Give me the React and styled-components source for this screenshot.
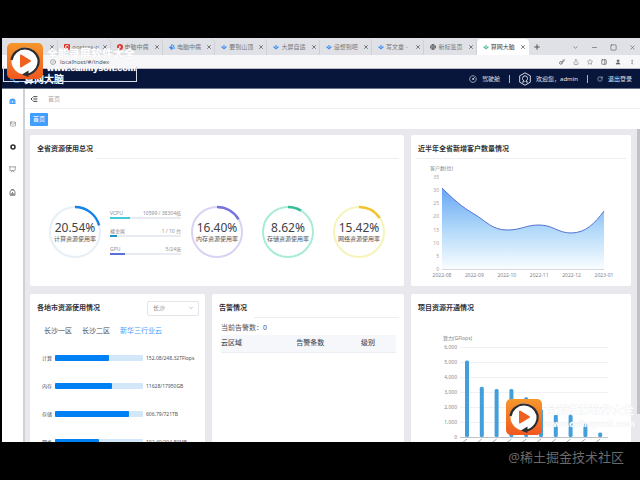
import {
  ChevronDown,
  CircleGauge,
  Globe,
  IndentDecrease,
  Info,
  Key,
  Mail,
  Minus,
  MoreVertical,
  PanelRight,
  PawPrint,
  Plus,
  Presentation,
  RotateCw,
  Share,
  Square,
  Star,
  User,
  X,
} from "lucide-react";
import React from "react";
import styled, { createGlobalStyle } from "styled-components";

const GlobalStyle = createGlobalStyle`
  * {
    box-sizing: border-box;
  }
  body {
    margin: 0;
    background: #000;
    font-family: "Noto Sans", "Noto Sans CJK SC", sans-serif;
    font-size: 6px;
    line-height: 8px;
    color: #505258;
  }
  button, input, select {
    font: inherit;
    color: inherit;
    border: 0;
    padding: 0;
    margin: 0;
    background: none;
  }
  a {
    color: inherit;
    text-decoration: none;
  }
  svg {
    flex: none;
  }
`;

const Stage = styled.div`
  height: 100vh;
  display: flex;
  flex-direction: column;
  padding-top: 38px;
`;
const Screen = styled.div`
  position: relative;
  flex: 1;
  min-height: 0;
  margin-left: 2px;
  display: flex;
  flex-direction: column;
  overflow: hidden;
  background: #fff;
`;
const Caption = styled.footer`
  height: 38px;
  padding: 5px 16px;
  text-align: right;
  font-size: 13px;
  line-height: 20px;
  color: #6a6a6a;
`;

/* browser window */
const TabStrip = styled.div`
  flex: none;
  height: 17px;
  display: flex;
  align-items: center;
  padding: 1px 4px 0;
  background: #dfe1e6;
`;
const Tabs = styled.div`
  display: flex;
  align-self: stretch;
  width: 83%;
  margin-right: 4px;
`;
const Tab = styled.div`
  flex: 1;
  min-width: 0;
  display: flex;
  align-items: center;
  gap: 2px;
  padding: 0 3px 0 6px;
  border-radius: 4px 4px 0 0;
  color: ${(props) => (props.$active ? "#444" : "#777")};
  background: ${(props) => (props.$active ? "#fff" : "transparent")};
  box-shadow: ${(props) => (props.$active ? "none" : "inset -1px 0 #cfd1d6")};
`;
const TabTitle = styled.span`
  flex: 1;
  white-space: nowrap;
`;
const IconButton = styled.button`
  display: flex;
  color: #555;
`;
const WindowButtons = styled.div`
  margin-left: auto;
  display: flex;
  gap: 12px;
`;
const AddressBar = styled.div`
  flex: none;
  height: 14px;
  display: flex;
  align-items: center;
  gap: 4px;
  padding: 0 5px 0 48px;
  background: #f7f7f9;
  border-bottom: 1px solid #b9bcc6;
  color: #666;
`;
const Address = styled.input`
  flex: 1;
  height: 10px;
  color: #555;
`;
const Actions = styled.div`
  display: flex;
  gap: 8px;
`;

/* site header */
const Header = styled.header`
  flex: none;
  height: 20px;
  display: flex;
  align-items: center;
  padding: 0 8px 0 7px;
  background: #08163b;
  border-bottom: 1px solid #6c7489;
  color: #e3e7f2;
`;
const Brand = styled.div`
  display: flex;
  align-items: center;
  gap: 4px;
  color: #fff;
  font-size: 10px;
  line-height: 12px;
  font-weight: 700;
`;
const HeaderNav = styled.nav`
  margin-left: auto;
  display: flex;
  align-items: center;
  gap: 9px;
`;
const HeaderLink = styled.a`
  display: flex;
  align-items: center;
  gap: 5px;
`;
const Divider = styled.span`
  width: 1px;
  height: 8px;
  background: #aab2c8;
`;

/* body */
const Body = styled.div`
  flex: 1;
  min-height: 0;
  display: flex;
`;
const Sidebar = styled.nav`
  flex: none;
  width: 23px;
  border-right: 2px solid #cfd1d8;
`;
const SideLink = styled.a`
  height: 23px;
  display: flex;
  align-items: center;
  justify-content: center;
  color: ${(props) => (props.$active ? "#409eff" : "#666")};
`;
const Main = styled.main`
  flex: 1;
  min-width: 0;
  display: flex;
  flex-direction: column;
`;
const Crumbs = styled.div`
  flex: none;
  height: 20px;
  display: flex;
  align-items: center;
  gap: 10px;
  padding: 0 5px;
  border-bottom: 1px solid #f0f1f4;
  color: #a9abb2;
`;
const TagRow = styled.div`
  flex: none;
  height: 20px;
  display: flex;
  align-items: center;
  padding: 0 5px;
`;
const Tag = styled.button`
  height: 13px;
  padding: 0 3px;
  border-radius: 1px;
  background: #409eff;
  color: #fff;
`;
const Scroller = styled.div`
  flex: 1;
  min-height: 0;
  display: flex;
  background: #e9e9ed;
`;
const Thumb = styled.div`
  flex: none;
  width: 3px;
  height: 91%;
  background: #c1c2c7;
`;
const Grid = styled.div`
  flex: 1;
  min-width: 0;
  display: grid;
  grid-template-columns: 175fr 192fr 220fr;
  align-items: stretch;
  align-content: start;
  gap: 8px 7px;
  padding: 6px 6px 8px 5px;
`;
const Card = styled.section`
  min-width: 0;
  grid-column: span ${(props) => props.$span || 1};
  background: #fff;
  border-radius: 2px;
`;
const CardHead = styled.div`
  height: 24px;
  display: flex;
  align-items: center;
  justify-content: space-between;
  padding: 4px 6px 0 7px;
`;
const CardTitle = styled.h2`
  margin: 0;
  font-size: 7px;
  line-height: 10px;
  font-weight: 700;
  color: #303238;
`;
const Rule = styled.hr`
  height: 1px;
  margin: -1px 5px 0 ${(props) => props.$start}px;
  border: 0;
  background: #eceef4;
`;

/* usage overview */
const Overview = styled.div`
  display: flex;
  align-items: center;
  gap: 17px;
  padding: 46px 18px 27px;
`;
const RingBox = styled.figure`
  position: relative;
  flex: none;
  width: 54px;
  height: 54px;
  margin: 0;
`;
const RingText = styled.figcaption`
  position: absolute;
  inset: 0;
  display: flex;
  flex-direction: column;
  align-items: center;
  justify-content: center;
  white-space: nowrap;
`;
const Percent = styled.span`
  font-size: 12px;
  line-height: 14px;
  color: #404248;
`;
const Compute = styled.div`
  flex: 1;
  display: flex;
  align-items: center;
  gap: 8px;
  margin-right: -8px;
`;
const Meters = styled.div`
  flex: 1;
  display: flex;
  flex-direction: column;
  gap: 8px;
`;
const MeterText = styled.div`
  display: flex;
  justify-content: space-between;
  font-size: 5px;
  line-height: 8px;
  color: #8d9096;
`;
const MeterTrack = styled.div`
  height: 2px;
  background: #e9ebf2;
`;
const MeterFill = styled.div`
  height: 2px;
  background: ${(props) => props.$color};
`;

/* per-city usage */
const CitySelect = styled.label`
  display: grid;
  width: 52px;
  height: 15px;
  align-items: center;
  border: 1px solid #e3e5ea;
  border-radius: 2px;
  padding: 0 4px 0 5px;
  color: #888;
  select,
  svg {
    grid-area: 1 / 1;
  }
  svg {
    justify-self: end;
  }
  select {
    appearance: none;
    width: 100%;
    height: 10px;
    line-height: 10px;
  }
`;
const Zones = styled.div`
  display: flex;
  gap: 10px;
  padding: 8px 14px 8px;
`;
const Zone = styled.button`
  font-size: 7px;
  line-height: 10px;
  color: ${(props) => (props.$active ? "#409eff" : "#45474d")};
`;
const UsageRow = styled.div`
  display: grid;
  grid-template-columns: 10px 88fr 55fr;
  align-items: center;
  column-gap: 3px;
  height: 28px;
  padding: 0 4px 0 12px;
  font-size: 5px;
  white-space: nowrap;
`;
const UsageTrack = styled.div`
  height: 6px;
  border-radius: 1px;
  background: #d3e7fa;
`;
const UsageFill = styled.div`
  height: 6px;
  border-radius: 1px;
  background: #0080f5;
`;

/* alerts */
const AlertBox = styled.div`
  padding: 5px 8px 0 9px;
  font-size: 7px;
  line-height: 10px;
`;
const AlertTable = styled.table`
  width: 100%;
  margin-top: 2px;
  border-collapse: collapse;
  table-layout: fixed;
  th {
    height: 17px;
    padding: 0;
    text-align: left;
    font-weight: 500;
    background: #f6f7fb;
    border-bottom: 1px solid #eceef4;
  }
`;
const Chart = styled.svg`
  display: block;
  width: 100%;
  font-size: 5px;
  fill: #85878d;
`;

/* overlay */
const Badge = styled.div`
  position: absolute;
  display: flex;
  align-items: center;
  gap: 4px;
  left: ${(props) => props.$left};
  top: ${(props) => props.$top}px;
  color: #fff;
  font-family: "Liberation Sans", "Noto Sans CJK SC", sans-serif;
  font-weight: 700;
  font-size: 9px;
  line-height: 14px;
  white-space: nowrap;
  text-shadow: 0 0 1px #dcdde2;
`;
const BadgeTitle = styled.div`
  font-size: 11px;
`;
const BadgeFrame = styled.div`
  position: absolute;
  left: 1px;
  top: 28px;
  width: 134px;
  height: 16px;
  border: 1px solid #d9dce5;
  border-top: 0;
`;

const browserTabs = [
  { title: "", color: "#999" },
  { title: "postcss-p", color: "#e0382c", kind: "block" },
  { title: "电脑中病", color: "#dd3a34", kind: "dot" },
  { title: "电脑中病", color: "#3988ee", kind: "paw" },
  { title: "要到山顶", color: "#3d8df5" },
  { title: "大屏自适", color: "#3d8df5" },
  { title: "设想到吧", color: "#3d8df5" },
  { title: "写文章 - ", color: "#3d8df5" },
  { title: "新标签页", color: "#555", kind: "globe" },
  { title: "算网大脑", color: "#4fb99a", active: true },
];

const meters = [
  { name: "VCPU", value: "10599 / 38304核", fill: 28, color: "#43c9dc" },
  { name: "裸金属", value: "1 / 10 台", fill: 10, color: "#1e93c8" },
  { name: "GPU", value: "5/24张", fill: 21, color: "#5b70e0" },
];

const rings = [
  { name: "内存资源使用率", value: 16.4, color: "#7573e0", track: "#d8d3f3" },
  { name: "存储资源使用率", value: 8.62, color: "#36bd95", track: "#a8ecd8" },
  { name: "网络资源使用率", value: 15.42, color: "#f2c530", track: "#f7f3ba" },
];

const usage = [
  { name: "计算", value: "152.08/248.32TFlops", fill: 61 },
  { name: "内存", value: "11628/17950GB", fill: 65 },
  { name: "存储", value: "606.79/721TB", fill: 84 },
  { name: "网络", value: "102.40/204.80MB", fill: 50 },
];

const months = ["2022-08", "2022-09", "2022-10", "2022-11", "2022-12", "2023-01"];
const projects = [5100, 3350, 3200, 3200, 2650, 1850, 1500, 1500, 900, 300];

const Favicon = ({ kind, color }) => {
  if (kind === "paw") return <PawPrint size={6} color={color} fill={color} />;
  if (kind === "globe") return <Globe size={6} color={color} strokeWidth={3} />;
  return (
    <svg width="6" height="6" viewBox="0 0 6 6" fill={color}>
      {kind === "block" && (
        <>
          <rect width="6" height="6" rx="1" />
          <path d="M4.4 2A1.6 1.6 0 1 0 4.4 4" fill="none" stroke="#fff" />
        </>
      )}
      {kind === "dot" && (
        <>
          <circle cx="3" cy="3" r="3" />
          <path d="M2.2 1.6 4.2 3 2.2 4.4z" fill="#fff" />
        </>
      )}
      {!kind && <path d="M3 1 4.2 2 3 3 1.8 2zM0 3l1-.8 2 1.6 2-1.6 1 .8-3 2.4z" />}
    </svg>
  );
};

const HomeIcon = () => (
  <svg width="7" height="6" viewBox="0 0 7 6" fill="currentColor">
    <path d="M.5 6V3.500a3 3 0 0 1 6 0V6z" />
    <path d="M3.500 4.800V2.500M1.500 4h1M4.700 4h1" stroke="#fff" strokeWidth=".7" />
  </svg>
);

const AssetIcon = () => (
  <svg width="7" height="7" viewBox="0 0 7 7" fill="none" stroke="currentColor" strokeWidth=".8">
    <path d="M1 6.300V3a2.500 2 0 0 1 5 0v3.300zM2.500 1V.5h2V1M3.500 6V3M2.200 4v2M4.800 4v2" />
  </svg>
);

const Ring = ({ name, value, color, track }) => {
  const length = 2 * Math.PI * 25;
  return (
    <RingBox>
      <svg width="54" height="54" viewBox="0 0 54 54" fill="none" strokeWidth="2">
        <circle cx="27" cy="27" r="25" stroke={track} />
        <circle
          cx="27"
          cy="27"
          r="25"
          stroke={color}
          strokeWidth="2.5"
          strokeDasharray={`${(length * value) / 100} ${length}`}
          transform="rotate(-90 27 27)"
        />
      </svg>
      <RingText>
        <Percent>{value.toFixed(2)}%</Percent>
        {name}
      </RingText>
    </RingBox>
  );
};

const CustomerChart = () => {
  const curve =
    "M31 29C42 40 51 48 63 55C75 62 81 71 96 71C111 71 114 66 128 66C142 66 147 74 160 74C175 74 184 64 193 52";
  return (
    <Chart viewBox="0 0 220 127">
      <defs>
        <linearGradient id="area" x1="0" y1="29" x2="0" y2="110" gradientUnits="userSpaceOnUse">
          <stop offset="0" stopColor="#67a5f3" />
          <stop offset="0.5" stopColor="#afd8fa" />
          <stop offset="1" stopColor="#f9fdff" />
        </linearGradient>
      </defs>
      <text x="19" y="11">客户数(位)</text>
      {[0, 5, 10, 15, 20, 25, 30, 35].map((n) => (
        <text key={n} x="28" y={112 - n * 2.63} textAnchor="end" fill="#a4a6ab">
          {n}
        </text>
      ))}
      <path d={`${curve}V110H31Z`} fill="url(#area)" />
      <path d={curve} fill="none" stroke="#5672d4" />
      <path d="M31 110.500H193" stroke="#d6d8dd" />
      {months.map((month, i) => (
        <text key={month} x={31 + i * 32.4} y="118" textAnchor="middle">
          {month}
        </text>
      ))}
    </Chart>
  );
};

const ProjectChart = () => (
  <Chart viewBox="0 0 220 140">
    <text x="32" y="22">算力(GFlops)</text>
    {[0, 1, 2, 3, 4, 5, 6].map((n) => (
      <g key={n}>
        <path d={`M49 ${119.5 - n * 15}H197`} stroke={n ? "#f0f1f4" : "#bfc2c8"} />
        <text x="46" y={121 - n * 15} textAnchor="end">
          {(n * 1000).toLocaleString("en-US")}
        </text>
      </g>
    ))}
    {projects.map((value, i) => {
      const x = 56 + i * 14.8;
      const height = (value / 1000) * 15;
      return (
        <g key={i}>
          <rect x={x - 2} y={119 - height} width="4" height={height} rx="1.5" fill="#439fdc" />
          <path d={`M${x} 121l-5 4`} stroke="#a7a9ae" />
        </g>
      );
    })}
  </Chart>
);

const PlayLogo = ({ id }) => (
  <svg width="36" height="36" viewBox="0 0 36 36">
    <defs>
      <linearGradient id={id} x1="0" y1="0" x2="0" y2="1">
        <stop offset="0" stopColor="#f5972c" />
        <stop offset="1" stopColor="#f0581f" />
      </linearGradient>
    </defs>
    <rect width="36" height="36" rx="5" fill={`url(#${id})`} />
    <circle cx="18" cy="18" r="13.500" fill="#fff" />
    <path
      d="M4.500 17A13.800 13.800 0 0 1 31.500 16C32.500 24 27 30.500 20 31.500"
      fill="none"
      stroke="#2c2c31"
      strokeWidth="2.200"
    />
    <path d="M15 31.500 21.500 27.500V34z" fill="#2c2c31" />
    <path d="M13 12.500q0-1.500 1.500-.8l9 5.500q1.200.8 0 1.600l-9 5.500q-1.500.7-1.500-.8z" fill="#f0601f" />
  </svg>
);

const Watermark = ({ id, left, top }) => (
  <Badge $left={left} $top={top}>
    <PlayLogo id={id} />
    <div>
      <BadgeTitle>全能录屏软件大全</BadgeTitle>
      www.callmysoft.com
    </div>
  </Badge>
);

const App = () => {
  return (
    <Stage>
      <GlobalStyle />
      <Screen>
        <TabStrip>
          <Tabs>
            {browserTabs.map((tab, i) => (
              <Tab key={i} $active={tab.active}>
                <Favicon kind={tab.kind} color={tab.color} />
                <TabTitle>{tab.title}</TabTitle>
                <IconButton aria-label="关闭标签页">
                  <X size={6} strokeWidth={3} />
                </IconButton>
              </Tab>
            ))}
          </Tabs>
          <IconButton aria-label="新标签页">
            <Plus size={8} strokeWidth={3} />
          </IconButton>
          <WindowButtons>
            <IconButton aria-label="搜索标签页">
              <ChevronDown size={7} />
            </IconButton>
            <IconButton aria-label="最小化">
              <Minus size={7} />
            </IconButton>
            <IconButton aria-label="最大化">
              <Square size={7} />
            </IconButton>
            <IconButton aria-label="关闭">
              <X size={7} />
            </IconButton>
          </WindowButtons>
        </TabStrip>
        <AddressBar>
          <Info size={6} />
          <Address aria-label="地址" defaultValue="localhost/#/index" />
          <Actions>
            <Key size={6} strokeWidth={3} />
            <Share size={6} />
            <Star size={6} />
            <PanelRight size={6} strokeWidth={3} />
            <User size={6} fill="#555" />
            <MoreVertical size={6} />
          </Actions>
        </AddressBar>
        <Header>
          <Brand>
            <svg width="11" height="10" viewBox="0 0 11 10" fill="none" stroke="#2f80dd">
              <path d="M1 5h3l2-3h4M4 5l2 3h4" strokeWidth="1.500" />
            </svg>
            算网大脑
          </Brand>
          <HeaderNav>
            <HeaderLink href="#cockpit">
              <CircleGauge size={8} />
              驾驶舱
            </HeaderLink>
            <Divider />
            <HeaderLink href="#user">
              <svg width="12" height="14" viewBox="0 0 12 14" fill="none" stroke="#d2d8e8">
                <path d="M6 .8 11.300 3.800v6.400L6 13.200.7 10.200V3.800z" />
                <path d="M3 10h2V9Q3.500 8 3.500 6.500a2.500 2.700 0 0 1 5 0Q8.500 8 7 9v1h2" />
              </svg>
              欢迎您，admin
            </HeaderLink>
            <Divider />
            <HeaderLink href="#logout">
              <RotateCw size={6} />
              退出登录
            </HeaderLink>
          </HeaderNav>
        </Header>
        <Body>
          <Sidebar>
            <SideLink href="#home" aria-label="首页" $active>
              <HomeIcon />
            </SideLink>
            <SideLink href="#mail" aria-label="消息">
              <Mail size={6} />
            </SideLink>
            <SideLink href="#settings" aria-label="设置">
              <svg width="6" height="6" viewBox="0 0 6 6" fill="none" stroke="#333">
                <circle cx="3" cy="3" r="2" strokeWidth="1.600" />
              </svg>
            </SideLink>
            <SideLink href="#monitor" aria-label="监控">
              <Presentation size={7} />
            </SideLink>
            <SideLink href="#assets" aria-label="资源">
              <AssetIcon />
            </SideLink>
          </Sidebar>
          <Main>
            <Crumbs>
              <IndentDecrease size={8} strokeWidth={3} color="#444" />
              首页
            </Crumbs>
            <TagRow>
              <Tag>首页</Tag>
            </TagRow>
            <Scroller>
              <Grid>
                <Card $span={2}>
                  <CardHead>
                    <CardTitle>全省资源使用总况</CardTitle>
                  </CardHead>
                  <Rule $start={66} />
                  <Overview>
                    <Compute>
                      <Ring name="计算资源使用率" value={20.54} color="#1583e8" track="#e6eff8" />
                      <Meters>
                        {meters.map((meter) => (
                          <div key={meter.name}>
                            <MeterText>
                              <span>{meter.name}</span>
                              <span>{meter.value}</span>
                            </MeterText>
                            <MeterTrack>
                              <MeterFill $color={meter.color} style={{ width: `${meter.fill}%` }} />
                            </MeterTrack>
                          </div>
                        ))}
                      </Meters>
                    </Compute>
                    {rings.map((ring) => (
                      <Ring key={ring.name} {...ring} />
                    ))}
                  </Overview>
                </Card>
                <Card>
                  <CardHead>
                    <CardTitle>近半年全省新增客户数量情况</CardTitle>
                  </CardHead>
                  <Rule $start={5} />
                  <CustomerChart />
                </Card>
                <Card>
                  <CardHead>
                    <CardTitle>各地市资源使用情况</CardTitle>
                    <CitySelect>
                      <select aria-label="地市" defaultValue="长沙">
                        <option>长沙</option>
                      </select>
                      <ChevronDown size={6} />
                    </CitySelect>
                  </CardHead>
                  <Zones>
                    <Zone>长沙一区</Zone>
                    <Zone>长沙二区</Zone>
                    <Zone $active>新华三行业云</Zone>
                  </Zones>
                  {usage.map((row) => (
                    <UsageRow key={row.name}>
                      <span>{row.name}</span>
                      <UsageTrack>
                        <UsageFill style={{ width: `${row.fill}%` }} />
                      </UsageTrack>
                      <span>{row.value}</span>
                    </UsageRow>
                  ))}
                </Card>
                <Card>
                  <CardHead>
                    <CardTitle>告警情况</CardTitle>
                  </CardHead>
                  <Rule $start={42} />
                  <AlertBox>
                    当前告警数：0
                    <AlertTable>
                      <colgroup>
                        <col width="43%" />
                        <col width="37%" />
                        <col width="20%" />
                      </colgroup>
                      <thead>
                        <tr>
                          <th>云区域</th>
                          <th>告警条数</th>
                          <th>级别</th>
                        </tr>
                      </thead>
                    </AlertTable>
                  </AlertBox>
                </Card>
                <Card>
                  <CardHead>
                    <CardTitle>项目资源开通情况</CardTitle>
                  </CardHead>
                  <ProjectChart />
                </Card>
              </Grid>
              <Thumb />
            </Scroller>
          </Main>
        </Body>
        <BadgeFrame />
        <Watermark id="badgeTop" left="5px" top={5} />
        <Watermark id="badgeBottom" left="79%" top={361} />
      </Screen>
      <Caption>@稀土掘金技术社区</Caption>
    </Stage>
  );
};

export default App;
